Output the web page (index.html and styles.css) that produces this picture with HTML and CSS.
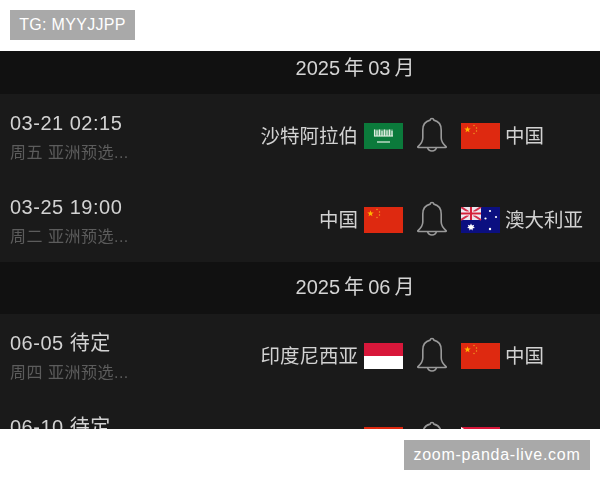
FILE: index.html
```html
<!DOCTYPE html>
<html lang="zh">
<head>
<meta charset="utf-8">
<title>赛程</title>
<link rel="stylesheet" href="styles.css">
</head>
<body>
<svg class="defs" width="0" height="0" aria-hidden="true">
  <defs>
    <symbol id="bell" viewBox="0 0 30 36">
      <path d="M15 1.500c-1 0-1.700.6-1.900 1.600C8.500 4.200 5.800 8 5.800 13v8c0 3.500-2 6-4.800 8.600-.4.400-.2.900.3.900h27.400c.5 0 .7-.5.300-.9-2.800-2.600-4.800-5.100-4.800-8.600v-8c0-5-2.700-8.800-7.300-9.900-.2-1-.9-1.600-1.900-1.600z" fill="none" stroke="#999" stroke-width="1.600"/>
      <path d="M10.500 30.500c.6 2.200 2.300 3.500 4.500 3.500s3.900-1.300 4.500-3.500" fill="none" stroke="#999" stroke-width="1.600"/>
    </symbol>
    <symbol id="cn" viewBox="0 0 39 26">
      <rect width="39" height="26" fill="#de2910"/>
      <polygon points="6.500,3.200 7.300,5.500 9.700,5.500 7.800,7 8.500,9.300 6.500,7.900 4.500,9.300 5.200,7 3.300,5.500 5.700,5.500" fill="#ffb400"/>
      <circle cx="13" cy="2.500" r=".7" fill="#f0a020"/>
      <circle cx="15.500" cy="5" r=".7" fill="#f0a020"/>
      <circle cx="15.500" cy="8" r=".7" fill="#f0a020"/>
      <circle cx="13" cy="10.500" r=".7" fill="#f0a020"/>
    </symbol>
    <symbol id="sa" viewBox="0 0 39 26">
      <rect width="39" height="26" fill="#0b7a3b"/>
      <rect x="10" y="6.500" width="19" height="7" fill="#cfe3d2" opacity=".45"/>
      <path d="M10.500 6.500v7M13 7.500v6M15.500 6.500v7M18 8v5.500M20.500 6.500v7M23 7.500v6M25.500 6.500v7M28 8v5.500M10 13h19" stroke="#e2efe3" stroke-width="1.100"/>
      <path d="M13 19h13" stroke="#e6f2e8" stroke-width="1.200"/>
    </symbol>
    <symbol id="au" viewBox="0 0 39 26">
      <rect width="39" height="26" fill="#0b0f80"/>
      <rect width="20" height="13" fill="#e8e8f0"/>
      <path d="M0 0l20 13M20 0L0 13" stroke="#d4304a" stroke-width="2"/>
      <path d="M10 0v13M0 6.500h20" stroke="#f4f4f8" stroke-width="4"/>
      <path d="M10 0v13M0 6.500h20" stroke="#d4203a" stroke-width="2.200"/>
      <polygon points="10,16.500 11,18.500 13.200,17.700 12.400,19.800 14,21 11.800,21.300 11.500,23.500 10,22 8.500,23.500 8.200,21.300 6,21 7.600,19.800 6.800,17.700 9,18.500" fill="#fff"/>
      <circle cx="29" cy="4" r="1.100" fill="#fff"/>
      <circle cx="24.500" cy="11.500" r="1.100" fill="#fff"/>
      <circle cx="35" cy="10" r="1.100" fill="#fff"/>
      <circle cx="29" cy="22" r="1.200" fill="#fff"/>
    </symbol>
    <symbol id="id" viewBox="0 0 39 26">
      <rect width="39" height="13" fill="#d8173a"/>
      <rect y="13" width="39" height="13" fill="#fff"/>
    </symbol>
    <symbol id="ph" viewBox="0 0 39 26">
      <rect width="39" height="13" fill="#d8173a"/>
      <rect y="13" width="39" height="13" fill="#1c3a9c"/>
      <polygon points="0,0 20,13 0,26" fill="#fff"/>
    </symbol>
  </defs>
</svg>

<div class="tag tag-top">TG: MYYJJPP</div>

<main class="app">
  <div class="month">2025 年 03 月</div>

  <section class="match">
    <div class="info"><div class="time">03-21 02:15</div><div class="sub">周五 亚洲预选...</div></div>
    <div class="team home"><span>沙特阿拉伯</span><svg class="flag"><use href="#sa"/></svg></div>
    <svg class="bell"><use href="#bell"/></svg>
    <div class="team"><svg class="flag"><use href="#cn"/></svg><span>中国</span></div>
  </section>

  <section class="match">
    <div class="info"><div class="time">03-25 19:00</div><div class="sub">周二 亚洲预选...</div></div>
    <div class="team home"><span>中国</span><svg class="flag"><use href="#cn"/></svg></div>
    <svg class="bell"><use href="#bell"/></svg>
    <div class="team"><svg class="flag"><use href="#au"/></svg><span>澳大利亚</span></div>
  </section>

  <div class="month month-tall">2025 年 06 月</div>

  <section class="match">
    <div class="info"><div class="time">06-05 待定</div><div class="sub">周四 亚洲预选...</div></div>
    <div class="team home"><span>印度尼西亚</span><svg class="flag"><use href="#id"/></svg></div>
    <svg class="bell"><use href="#bell"/></svg>
    <div class="team"><svg class="flag"><use href="#cn"/></svg><span>中国</span></div>
  </section>

  <section class="match">
    <div class="info"><div class="time">06-10 待定</div><div class="sub">周二 亚洲预选...</div></div>
    <div class="team home"><span>中国</span><svg class="flag"><use href="#cn"/></svg></div>
    <svg class="bell"><use href="#bell"/></svg>
    <div class="team"><svg class="flag"><use href="#ph"/></svg><span>菲律宾</span></div>
  </section>
</main>

<div class="tag tag-bottom">zoom-panda-live.com</div>
</body>
</html>
```
FILE: styles.css
```css
html, body {
  margin: 0;
  padding: 0;
  background: #fff;
}
body {
  width: 600px;
  height: 480px;
  overflow: hidden;
  position: relative;
  padding-top: 51px;
  box-sizing: border-box;
  font-family: "Liberation Sans", "Noto Sans CJK SC", sans-serif;
}
.defs {
  position: absolute;
}
.tag {
  position: absolute;
  height: 30px;
  line-height: 30px;
  background: #a9a9a9;
  color: #fff;
  font-size: 16px;
  text-align: center;
}
.tag-top {
  left: 10px;
  top: 10px;
  width: 125px;
  letter-spacing: .3px;
}
.tag-bottom {
  left: 404px;
  top: 440px;
  width: 186px;
  letter-spacing: .75px;
}
.app {
  height: 378px;
  overflow: hidden;
  background: #111;
  filter: blur(.35px);
}
.month {
  height: 43px;
  box-sizing: border-box;
  padding-top: 3px;
  padding-left: 110px;
  text-align: center;
  color: #d4d4d4;
  font-size: 20px;
  line-height: 28px;
  word-spacing: -1.500px;
}
.month-tall {
  height: 52px;
  padding-top: 11px;
}
.match {
  height: 84px;
  box-sizing: border-box;
  padding: 0 10px;
  background: #1a1a1a;
  display: grid;
  grid-template-columns: 1fr auto 30px 129px;
  column-gap: 14px;
  align-items: center;
}
.info {
  display: flex;
  flex-direction: column;
  gap: 6px;
  padding-top: 2px;
}
.time {
  color: #d2d2d2;
  font-size: 20px;
  line-height: 26px;
  letter-spacing: .5px;
}
.sub {
  color: #5c5c5c;
  font-size: 16px;
  line-height: 22px;
  letter-spacing: .5px;
}
.team {
  display: flex;
  align-items: center;
  gap: 5px;
  color: #d2d2d2;
  font-size: 19.500px;
}
.team span {
  padding-bottom: 4px;
}
.home {
  justify-content: flex-end;
  gap: 6px;
}
.flag {
  width: 39px;
  height: 26px;
  flex: none;
}
.bell {
  width: 30px;
  height: 36px;
  margin-bottom: 2px;
}
```
